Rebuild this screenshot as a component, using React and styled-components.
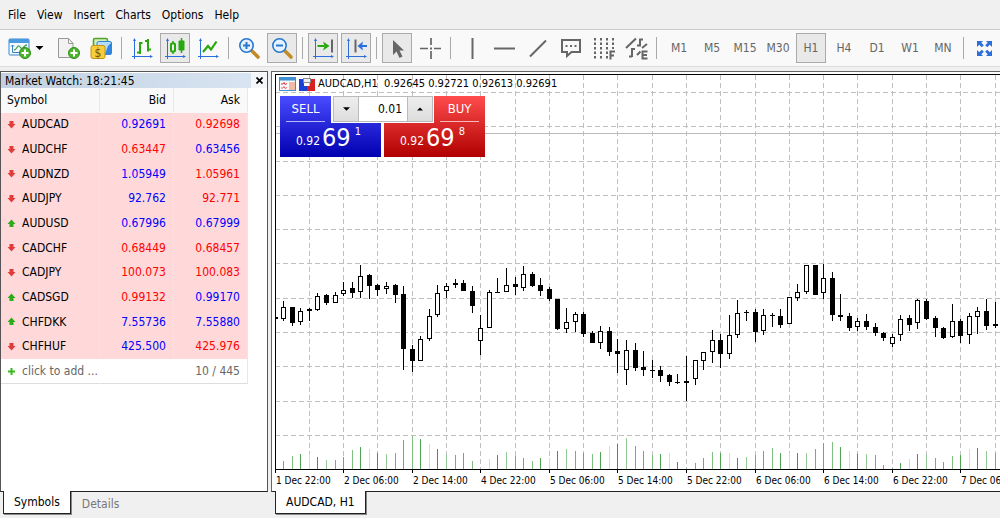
import React, { useState } from "react";
import styled, { createGlobalStyle, css } from "styled-components";

const GlobalStyle = createGlobalStyle`
  *, *::before, *::after { box-sizing: border-box; }
  body {
    margin: 0;
    background: #f0f0f0;
    color: #000;
    font: 12px/16px "DejaVu Sans Condensed", "Noto Sans", sans-serif;
  }
  button, input { font: inherit; color: inherit; }
  button { cursor: pointer; }
`;

const Page = styled.div`
  display: flex;
  flex-direction: column;
  min-height: 100vh;
  overflow: hidden;
`;

const MenuBar = styled.nav`
  display: flex;
  align-items: center;
  gap: 11px;
  height: 29px;
  padding: 0 8px;
`;

const MenuItem = styled.button`
  padding: 0;
  border: 0;
  background: none;
`;

const ToolBar = styled.div`
  display: flex;
  align-items: center;
  gap: 3px;
  height: 38px;
  padding-left: 4px;
  overflow: hidden;
  background: #f9f9f9;
  border-top: 1px solid #ccc;
  border-bottom: 1px solid #ddd;
`;

const ToolButton = styled.button`
  display: flex;
  flex: none;
  align-items: center;
  justify-content: ${(p) => (p.$wide ? "flex-start" : "center")};
  gap: 4px;
  width: ${(p) => (p.$wide ? 46 : 30)}px;
  height: 30px;
  padding: 0 0 0 ${(p) => (p.$wide ? 3 : 0)}px;
  color: #666;
  background: ${(p) => (p.$on ? "#e9e9e9" : "none")};
  border: 1px solid ${(p) => (p.$on ? "#aaa" : "transparent")};
  white-space: nowrap;
`;

const Periods = styled.div`
  display: flex;
  flex: none;
  gap: 3px;
  margin-left: 2px;
`;

const Separator = styled.span`
  flex: none;
  width: 1px;
  height: 22px;
  margin: 0 2px;
  background: #aaa;
`;

const Icon = styled.svg`
  display: block;
  flex: none;
`;

const Workspace = styled.main`
  display: flex;
  flex: 1;
  gap: 3px;
  padding-top: 4px;
`;

const Side = styled.section`
  display: flex;
  flex-direction: column;
  flex: none;
  width: 268px;
`;

const SideFrame = styled.div`
  flex: 1;
  padding-top: 1px;
  background: #fff;
  border: 1px solid #555;
  border-bottom-color: #222;
`;

const SideTitle = styled.header`
  display: flex;
  align-items: center;
  height: 15px;
  padding-left: 4px;
  background: linear-gradient(90deg, #c2d0e1, #d9e5f2);
`;

const TitleText = styled.h2`
  flex: 1;
  margin: 0;
  font-size: 12px;
  line-height: 14px;
  font-weight: 400;
`;

const CloseButton = styled.button`
  display: grid;
  place-items: center;
  align-self: stretch;
  width: 16px;
  padding: 0;
  border: 0;
  background: #f4f6f8;
`;

const Quotes = styled.table`
  width: 247px;
  height: 296px;
  border-collapse: separate;
  border-spacing: 0;
  table-layout: fixed;
`;

const Row = styled.tr`
  height: 24px;
`;

const Cell = styled.td`
  width: ${(p) => p.$w};
  padding: 0 7px 0 6px;
  text-align: ${(p) => (p.$num ? "right" : "left")};
  font-weight: 400;
  color: ${(p) => p.$color || "#000"};
  background: ${(p) => p.$bg || "#fff"};
  border-right: 1px solid ${(p) => (p.$open ? "transparent" : "#ece6e6")};
  border-bottom: 1px solid ${(p) => (p.$last ? "#ddd" : p.$bg || "#fff")};
`;

const SymbolName = styled.span`
  display: flex;
  align-items: center;
  gap: 6px;
  color: ${(p) => p.$color || "#000"};
`;

const AddButton = styled.button`
  padding: 0;
  border: 0;
  background: none;
  white-space: nowrap;
`;

const TabStrip = styled.div`
  display: flex;
  align-items: flex-start;
  flex: none;
  height: 26px;
  padding-left: ${(p) => p.$inset}px;
`;

const Tab = styled.button`
  height: ${(p) => (p.$on ? 23 : 24)}px;
  margin-top: ${(p) => (p.$on ? -1 : 0)}px;
  padding: 0 10px;
  border: ${(p) => (p.$on ? "1px solid #222" : "1px solid transparent")};
  border-top: 0;
  background: ${(p) => (p.$on ? "#fff" : "none")};
  color: ${(p) => (p.$on ? "#000" : "#777")};
  box-shadow: ${(p) => (p.$on ? "1px 1px 0 #888" : "none")};
`;

const ChartSide = styled.section`
  display: flex;
  flex-direction: column;
  flex: 1;
  min-width: 0;
`;

const ChartFrame = styled.div`
  flex: 1;
  padding: 2px 0 0 3px;
  background: #fff;
  border: 1px solid #666;
  border-right: 0;
  border-bottom-color: #222;
`;

const ChartArea = styled.div`
  position: relative;
  overflow: hidden;
  border-top: 1px solid #000;
`;

const ChartSvg = styled.svg`
  display: block;
  width: 100%;
  height: 398px;
`;

const ChartHeader = styled.div`
  position: absolute;
  top: 1px;
  left: 0;
  display: flex;
  align-items: center;
  gap: 3px;
  height: 16px;
  padding-left: 4px;
  font-size: 11px;
  white-space: pre;
`;

const TimeAxis = styled.ol`
  display: flex;
  width: max-content;
  height: 18px;
  margin: 0;
  padding: 0;
  list-style: none;
  font-size: 10px;
  line-height: 16px;
`;

const TimeMark = styled.li`
  width: ${(p) => p.$w}px;
  padding-left: 1px;
  white-space: nowrap;
`;

const TradePanel = styled.div`
  position: absolute;
  top: 21px;
  left: 5px;
  display: flex;
  gap: 3px;
  width: 205px;
  background: #fff;
`;

const sellShape = css`
  align-items: flex-start;
  background: linear-gradient(#4a4aff, #0000b0);
  clip-path: polygon(0 0, 51px 0, 51px 27px, 100% 27px, 100% 100%, 0 100%);
`;

const buyShape = css`
  align-items: flex-end;
  background: linear-gradient(#ff4d4d, #b00000);
  clip-path: polygon(50px 0, 100% 0, 100% 100%, 0 100%, 0 27px, 50px 27px);
`;

const TradeButton = styled.button`
  display: flex;
  flex-direction: column;
  flex: 1;
  height: 61px;
  padding: 0;
  border: 0;
  color: #fff;
  ${(p) => (p.$buy ? buyShape : sellShape)}
`;

const TradeSide = styled.span`
  width: 39px;
  height: 26px;
  margin: 0 6px;
  font-size: 13px;
  line-height: 26px;
  border-bottom: 1px solid #ffffffaa;
`;

const TradePrice = styled.span`
  display: flex;
  align-items: flex-start;
  align-self: stretch;
  padding-left: 16px;
  gap: 2px;
  line-height: 38px;
`;

const PriceBig = styled.span`
  font-size: 25px;
  line-height: 31px;
`;

const PriceSmall = styled.sup`
  margin-left: 2px;
  font-size: 11px;
  line-height: 20px;
  vertical-align: baseline;
`;

const Volume = styled.div`
  position: absolute;
  top: 0;
  left: 53px;
  display: flex;
  width: 100px;
  height: 26px;
  border: 1px solid #bbb;
  background: #fff;
`;

const StepButton = styled.button`
  display: grid;
  place-items: center;
  width: 25px;
  padding: 0;
  border: 0;
  background: linear-gradient(#eee, #ddd);
  border-left: ${(p) => (p.$up ? "1px solid #bbb" : "0")};
  border-right: ${(p) => (p.$up ? "0" : "1px solid #bbb")};
`;

const VolumeInput = styled.input`
  flex: 1;
  min-width: 0;
  padding: 0 5px;
  border: 0;
  background: none;
  text-align: right;
  outline: 0;
`;

/* ---------- icons ---------- */

const BLUE = "#2a6fdc";
const GREEN = "#27a80c";
const GRAY = "#666";

const PlusBadge = () => (
  <g>
    <circle cx="17" cy="16" r="5.500" fill="#4cb52c" stroke="#2f8f18" />
    <path d="M17 12.500v7M13.500 16h7" stroke="#fff" strokeWidth="2" />
  </g>
);

const Axes = () => (
  <g stroke={BLUE} fill={BLUE}>
    <path d="M3.500 4v15.500H19M1 19.500h2M3.500 19v3" fill="none" strokeWidth="1" />
    <path d="M3.500 1l1.500 3h-3zM22 19.500l-3-1.500v3z" stroke="none" />
  </g>
);

const icons = {
  newChart: (
    <>
      <rect x="1" y="2" width="20" height="16" rx="1" fill="#f4faff" stroke="#3b87cf" />
      <rect x="1" y="2" width="20" height="4" fill="#4b9ae0" />
      <path d="M4.500 8v7.500H15M3 9.500l1.500-1.500L6 9.500" fill="none" stroke="#3b7fc4" />
      <path d="M6 13c3 0 3-5 5-4s2 4 4 2 2-3 4-3" fill="none" stroke="#43a047" strokeWidth="1.300" />
      <PlusBadge />
    </>
  ),
  newFile: (
    <>
      <path d="M1.500 1.500h10l4.500 5v14H1.500z" fill="#f2f2f2" stroke="#999" />
      <path d="M11.500 1.500v5h4.500z" fill="#fff" stroke="#999" />
      <PlusBadge />
    </>
  ),
  money: (
    <>
      <rect x="3.500" y="1.500" width="14" height="12" rx="1.500" fill="#d5efb8" stroke="#4fa52e" strokeWidth="1.600" />
      <rect x="7" y="4.500" width="14.500" height="13" rx="1.500" fill="#b5dcfb" stroke="#3184d8" />
      <path d="M18 9l3-3v11h-6z" fill="#2f86e0" />
      <rect x="1" y="8.500" width="14" height="13" rx="2" fill="#f8cd3c" stroke="#c9920c" />
      <text x="8" y="19.500" textAnchor="middle" fontSize="12" fill="#7a4e00">$</text>
    </>
  ),
  bars: (
    <>
      <Axes />
      <path d="M9 5v12M6 15.500h3M9 6h2.500M17 2v12.500M14 4h3M17 12.500h3" stroke={GREEN} strokeWidth="2" />
    </>
  ),
  candles: (
    <>
      <Axes />
      <path d="M9 4v13M17.500 1v15" stroke={GREEN} strokeWidth="1.500" />
      <rect x="7" y="6.500" width="4" height="8" rx="1" fill="#eee" stroke={GREEN} strokeWidth="2" />
      <rect x="14.500" y="3.500" width="6" height="10" rx="1" fill={GREEN} />
    </>
  ),
  line: (
    <>
      <Axes />
      <path d="M6 15l5-6 3 3.500 5.500-8" fill="none" stroke={GREEN} strokeWidth="2.200" />
    </>
  ),
  zoomIn: (
    <>
      <path d="M13.500 13.500l6.500 6.500" stroke="#c28a25" strokeWidth="3.600" strokeLinecap="round" />
      <circle cx="8.500" cy="8.500" r="6.700" fill="#e6f3ff" stroke="#2878d0" strokeWidth="1.600" />
      <path d="M8.500 5v7M5 8.500h7" stroke="#2878d0" strokeWidth="2" />
    </>
  ),
  zoomOut: (
    <>
      <path d="M13.500 13.500l6.500 6.500" stroke="#c28a25" strokeWidth="3.600" strokeLinecap="round" />
      <circle cx="8.500" cy="8.500" r="6.700" fill="#e6f3ff" stroke="#2878d0" strokeWidth="1.600" />
      <path d="M5 8.500h7" stroke="#2878d0" strokeWidth="2" />
    </>
  ),
  scroll: (
    <>
      <Axes />
      <path d="M5.500 9h7" stroke={GREEN} strokeWidth="2" />
      <path d="M11 4.500L17.500 9 11 13.500l1.500-4.500z" fill={GREEN} />
      <path d="M20 2.500v13" stroke={GRAY} strokeWidth="2" />
    </>
  ),
  shift: (
    <>
      <Axes />
      <path d="M10.500 2.500v13" stroke={GRAY} strokeWidth="2" />
      <path d="M16 9h6" stroke={BLUE} strokeWidth="2" />
      <path d="M18 4.500L12.500 9l5.500 4.500-1-4.500z" fill={BLUE} />
    </>
  ),
  cursor: <path d="M7 3v15l3.500-3.500 3 6.500 3-1.500-3-6H18z" fill={GRAY} />,
  cross: (
    <>
      <path d="M12 1v7M12 14v8M1 11.500h8M15 11.500h7" stroke={GRAY} strokeWidth="1.700" />
      <rect x="11" y="10.500" width="2" height="2" fill={GRAY} />
    </>
  ),
  vline: <path d="M12.500 1v21" stroke={GRAY} strokeWidth="2" />,
  hline: <path d="M1 11.500h21" stroke={GRAY} strokeWidth="2" />,
  trend: <path d="M4 19.500L20 3.500" stroke={GRAY} strokeWidth="2" />,
  note: (
    <>
      <path d="M3 3h18v12h-8.500l-4.500 4v-4H3z" fill="none" stroke={GRAY} strokeWidth="2" />
      <path d="M6.500 9h2M11 9h2M15.500 9h2" stroke={GRAY} strokeWidth="2" />
    </>
  ),
  fibo: (
    <>
      <path d="M3 1v21M9 1v21M15 1v21" stroke={GRAY} strokeWidth="2" strokeDasharray="2.500 2" />
      <path d="M21 1v11" stroke={GRAY} strokeWidth="2" strokeDasharray="2.500 2" />
      <path d="M18.500 22.500v-9M17.500 14.500h5.500M18 18.500h4" stroke={GRAY} strokeWidth="2" fill="none" />
    </>
  ),
  objects: (
    <>
      <path d="M1 11L11 1.500M12 18l3.500-3.500M17 11l5-4" stroke={GRAY} strokeWidth="2" />
      <path d="M15 1.500v8M15 2.500h3M12 8.500h3M7 11v9M7 12h3M4 19.500h3" stroke={GRAY} strokeWidth="2" />
      <path d="M22.500 14.500h-5v7h5M17.500 18h4.500" fill="none" stroke={GRAY} strokeWidth="2" />
    </>
  ),
  expand: (
    <g fill={BLUE}>
      <path d="M4 4h6L8.300 5.700l2.500 2.500-2 2-2.600-2.500L4 10z" />
      <path d="M18 4h-6l1.700 1.700-2.500 2.500 2 2 2.600-2.500L18 10z" transform="translate(1 0)" />
      <path d="M4 18h6l-1.700-1.700 2.500-2.500-2-2-2.600 2.500L4 12z" transform="translate(0 1)" />
      <path d="M18 18h-6l1.700-1.700-2.500-2.500 2-2 2.600 2.500L18 12z" transform="translate(1 1)" />
    </g>
  ),
};

const Glyph = ({ name }) => (
  <Icon width="23" height="23" viewBox="0 0 23 23" aria-hidden="true">{icons[name]}</Icon>
);

const Caret = ({ up, size = 8 }) => (
  <Icon width={size} height="4" viewBox="0 0 8 4" aria-hidden="true">
    <path d={up ? "M0 4h8L4 0z" : "M0 0h8L4 4z"} />
  </Icon>
);

const Direction = ({ up }) => (
  <Icon width="9" height="9" viewBox="0 0 9 9" aria-hidden="true">
    <path
      d={up ? "M4.500 0.500L8.500 5H6.500v3h-4V5h-2z" : "M4.500 8.500L8.500 4H6.500V1h-4v3h-2z"}
      fill={up ? "#2faa1a" : "#e03c3c"}
    />
  </Icon>
);

/* ---------- data ---------- */

const menus = ["File", "View", "Insert", "Charts", "Options", "Help"];

const toolGroups = [
  [["bars", "Bar chart"], ["candles", "Candlesticks"], ["line", "Line chart"]],
  [["zoomIn", "Zoom in"], ["zoomOut", "Zoom out"]],
  [["scroll", "Auto scroll"], ["shift", "Chart shift"]],
  [["cursor", "Cursor"], ["cross", "Crosshair"]],
  [["vline", "Vertical line"], ["hline", "Horizontal line"], ["trend", "Trend line"], ["note", "Text"], ["fibo", "Fibonacci"], ["objects", "Objects"]],
];
const pressed = ["candles", "zoomOut", "scroll", "shift", "cursor"];

const periods = ["M1", "M5", "M15", "M30", "H1", "H4", "D1", "W1", "MN"];

const UP = "#00f";
const DOWN = "#f00";
const quotes = [
  ["AUDCAD", "0.92691", "0.92698", false, UP, DOWN],
  ["AUDCHF", "0.63447", "0.63456", false, DOWN, UP],
  ["AUDNZD", "1.05949", "1.05961", false, UP, DOWN],
  ["AUDJPY", "92.762", "92.771", false, UP, DOWN],
  ["AUDUSD", "0.67996", "0.67999", true, UP, UP],
  ["CADCHF", "0.68449", "0.68457", false, DOWN, DOWN],
  ["CADJPY", "100.073", "100.083", false, DOWN, DOWN],
  ["CADSGD", "0.99132", "0.99170", true, DOWN, UP],
  ["CHFDKK", "7.55736", "7.55880", true, UP, UP],
  ["CHFHUF", "425.500", "425.976", false, UP, DOWN],
];

/* high, body top, body bottom, low, hollow; in thirds of a pixel below BASE */
const bars = [
  [200, 200, 208, 208, 0], [154, 171, 208, 213, 1], [170, 171, 218, 228, 0], [174, 184, 217, 224, 1],
  [173, 178, 182, 213, 0], [129, 139, 179, 184, 1], [132, 135, 159, 165, 0], [126, 136, 160, 160, 1],
  [96, 121, 133, 137, 1], [96, 115, 128, 144, 0], [44, 79, 127, 143, 1], [73, 76, 108, 147, 0],
  [103, 105, 119, 138, 0], [96, 108, 118, 131, 1], [102, 105, 134, 159, 0], [109, 132, 298, 360, 0],
  [286, 298, 333, 366, 0], [258, 267, 332, 333, 1], [177, 197, 266, 272, 1], [106, 130, 194, 201, 1],
  [99, 108, 124, 143, 1], [87, 100, 104, 115, 0], [90, 99, 122, 122, 0], [108, 122, 167, 189, 0],
  [196, 235, 272, 314, 1], [120, 126, 233, 233, 1], [84, 126, 129, 130, 0], [54, 106, 125, 125, 1],
  [80, 102, 111, 135, 0], [48, 73, 115, 122, 1], [67, 73, 108, 111, 0], [84, 105, 122, 138, 0],
  [110, 118, 147, 153, 0], [147, 148, 237, 241, 0], [174, 216, 236, 250, 1], [186, 193, 215, 247, 1],
  [186, 193, 252, 260, 0], [244, 250, 279, 279, 0], [228, 244, 278, 298, 1], [231, 244, 305, 318, 0],
  [267, 303, 311, 370, 0], [270, 300, 359, 405, 1], [280, 299, 353, 362, 0], [303, 351, 360, 378, 0],
  [331, 359, 363, 383, 0], [347, 360, 378, 395, 0], [372, 376, 395, 407, 0], [373, 395, 399, 402, 0],
  [318, 393, 399, 453, 0], [331, 331, 388, 404, 1], [306, 307, 332, 360, 1], [240, 270, 307, 338, 1],
  [253, 270, 311, 354, 0], [195, 255, 311, 327, 1], [150, 189, 256, 263, 1], [180, 185, 189, 212, 0],
  [177, 186, 247, 276, 0], [177, 196, 242, 254, 1], [189, 195, 199, 231, 0], [177, 198, 224, 234, 0],
  [142, 142, 223, 223, 1], [102, 126, 143, 152, 1], [45, 45, 127, 131, 1], [44, 45, 134, 134, 0],
  [41, 85, 128, 147, 1], [67, 84, 195, 212, 0], [132, 196, 202, 212, 0], [189, 199, 234, 243, 0],
  [204, 214, 230, 243, 1], [192, 213, 231, 240, 0], [219, 231, 248, 257, 0], [245, 248, 263, 272, 0],
  [251, 262, 281, 291, 1], [195, 206, 256, 272, 1], [195, 205, 224, 243, 0], [147, 151, 220, 236, 1],
  [147, 154, 208, 209, 0], [199, 205, 234, 260, 0], [231, 234, 263, 266, 0], [163, 213, 260, 263, 1],
  [208, 212, 257, 279, 0], [189, 199, 256, 282, 1], [171, 184, 200, 253, 1], [147, 183, 227, 240, 0],
  [156, 223, 228, 235, 0],
];

const volumes = [
  0, 27, 42, 48, 47, 38, 30, 30, 39, 60, 69, 62, 51, 48, 50, 90, 102, 93, 77, 63, 46, 46, 52, 27, 4,
  32, 45, 54, 43, 36, 28, 35, 36, 56, 63, 56, 50, 48, 53, 72, 77, 97, 73, 56, 46, 48, 51, 24, 5, 21,
  35, 54, 51, 51, 36, 39, 45, 57, 66, 52, 52, 52, 52, 63, 82, 84, 69, 56, 48, 48, 45, 15, 7, 21, 32,
  48, 45, 35, 24, 42, 45, 63, 66, 57, 50,
];
const volumeShades = ["#6db56f", "#66b068", "#7fbf80", "#4fa351", "#c9e5c9", "#3f9a42", "#93c994"];

const times = [
  "1 Dec 22:00", "2 Dec 06:00", "2 Dec 14:00", "4 Dec 22:00", "5 Dec 06:00", "5 Dec 14:00",
  "5 Dec 22:00", "6 Dec 06:00", "6 Dec 14:00", "6 Dec 22:00", "7 Dec 06:00",
];

const STEP = 60 / 7;
const BASE = 175;
const AXIS = 395;
const barX = (i) => Math.floor(i * STEP);

function Candle({ i, bar: [high, top, bottom, low, hollow] }) {
  const x = barX(i);
  const y = (v) => Math.round(BASE + v / 3);
  const bodyHeight = Math.max(1, y(bottom) - y(top));
  return (
    <g>
      <rect x={x} y={y(high)} width="1" height={Math.max(1, y(low) - y(high))} />
      {hollow ? (
        <rect x={x - 1.5} y={y(top) + 0.5} width="4" height={Math.max(1, bodyHeight - 1)} fill="#fff" stroke="#000" />
      ) : (
        <rect x={x - 2} y={y(top)} width="5" height={bodyHeight} />
      )}
    </g>
  );
}

function PriceChart() {
  const columns = Array.from({ length: 80 }, (_, i) => barX(4 * (i + 1)) + 0.5);
  const rows = Array.from({ length: 11 }, (_, i) => Math.round(17 + i * 4 * STEP) + 0.5);
  return (
    <ChartSvg role="img" aria-label="AUDCAD hourly candlestick chart">
      <g stroke="#c0c0c0" strokeDasharray="5 3">
        {columns.map((x) => <line key={x} x1={x} x2={x} y1="0" y2={AXIS} />)}
        {rows.map((y) => <line key={y} x1="0" x2="100%" y1={y} y2={y} />)}
      </g>
      <line x1="0" x2="100%" y1="58.5" y2="58.5" stroke="#bbb" />
      {volumes.map((v, i) => (
        <rect key={i} x={barX(i)} y={Math.round(AXIS - v / 3)} width="1" height={Math.round(v / 3)} fill={volumeShades[i % 7]} />
      ))}
      {bars.map((bar, i) => <Candle key={i} i={i} bar={bar} />)}
      <path d="M0.5 0V399" stroke="#000" />
      <line x1="0" x2="100%" y1={AXIS - 0.5} y2={AXIS - 0.5} stroke="#000" />
      {times.map((t, i) => <rect key={t} x={barX(8 * i)} y={AXIS} width="1" height="4" />)}
    </ChartSvg>
  );
}

const BookIcon = () => (
  <Icon width="17" height="14" viewBox="0 0 17 14" aria-hidden="true">
    <rect x="0.500" y="0.500" width="16" height="13" fill="#f4f8fc" stroke="#3f8fd2" />
    <path d="M0 0h17v3.500H0z" fill="#3f8fd2" />
    <path d="M10 5h6v8h-6z" fill="#f3b9a4" />
    <path d="M2 7h2l1-1.500 1 2 2-1" fill="none" stroke="#e33" />
    <path d="M2 11h2l1-1.500 1 2 2-1" fill="none" stroke="#e66" />
  </Icon>
);

const TradeIcon = () => (
  <Icon width="16" height="13" viewBox="0 0 16 13" aria-hidden="true">
    <path d="M0 1h5v7h3v5H0z" fill="#1c3fd8" />
    <path d="M11 1h5v12H8V8h3z" fill="#d82020" />
    <rect x="4.500" y="0.500" width="7" height="4" fill="#eee" stroke="#888" />
  </Icon>
);

function OneClickTrading() {
  const [volume, setVolume] = useState("0.01");
  const change = (d) => setVolume(Math.max(0.01, Number(volume) + d).toFixed(2));
  return (
    <TradePanel>
      <TradeButton>
        <TradeSide>SELL</TradeSide>
        <TradePrice>0.92<PriceBig>69</PriceBig><PriceSmall>1</PriceSmall></TradePrice>
      </TradeButton>
      <TradeButton $buy>
        <TradeSide>BUY</TradeSide>
        <TradePrice>0.92<PriceBig>69</PriceBig><PriceSmall>8</PriceSmall></TradePrice>
      </TradeButton>
      <Volume>
        <StepButton aria-label="Decrease volume" onClick={() => change(-0.01)}><Caret size={7} /></StepButton>
        <VolumeInput aria-label="Volume" value={volume} onChange={(e) => setVolume(e.target.value)} />
        <StepButton $up aria-label="Increase volume" onClick={() => change(0.01)}><Caret up size={6} /></StepButton>
      </Volume>
    </TradePanel>
  );
}

function MarketWatch() {
  return (
    <Side>
      <SideFrame>
        <SideTitle>
          <TitleText>Market Watch: 18:21:45</TitleText>
          <CloseButton aria-label="Close">
            <Icon width="7" height="7" viewBox="0 0 7 7" aria-hidden="true">
              <path d="M0.500 0.500l6 6M6.500 0.500l-6 6" stroke="#000" strokeWidth="1.700" />
            </Icon>
          </CloseButton>
        </SideTitle>
        <Quotes>
          <tbody>
            <Row>
              <Cell as="th" scope="col" $w="40%" $bg="#f9f9f9">Symbol</Cell>
              <Cell as="th" scope="col" $w="30%" $num $bg="#f9f9f9">Bid</Cell>
              <Cell as="th" scope="col" $w="30%" $num $bg="#f9f9f9">Ask</Cell>
            </Row>
            {quotes.map(([symbol, bid, ask, up, bidColor, askColor]) => (
              <Row key={symbol}>
                <Cell $bg="#ffd9d9"><SymbolName><Direction up={up} />{symbol}</SymbolName></Cell>
                <Cell $num $bg="#ffd9d9" $color={bidColor}>{bid}</Cell>
                <Cell $num $bg="#ffd9d9" $color={askColor}>{ask}</Cell>
              </Row>
            ))}
            <Row>
              <Cell $last $open>
                <SymbolName $color="#666">
                  <Icon width="9" height="9" viewBox="0 0 9 9" aria-hidden="true">
                    <path d="M4.500 1v7M1 4.500h7" stroke="#3cb81e" strokeWidth="2" />
                  </Icon>
                  <AddButton>click to add ...</AddButton>
                </SymbolName>
              </Cell>
              <Cell $last $num colSpan={2} $color="#666">10 / 445</Cell>
            </Row>
          </tbody>
        </Quotes>
      </SideFrame>
      <TabStrip $inset={3}>
        <Tab $on>Symbols</Tab>
        <Tab>Details</Tab>
      </TabStrip>
    </Side>
  );
}

export default function App() {
  const [period, setPeriod] = useState("H1");
  return (
    <Page>
      <GlobalStyle />
      <MenuBar>{menus.map((m) => <MenuItem key={m}>{m}</MenuItem>)}</MenuBar>
      <ToolBar>
        <ToolButton $wide aria-label="New chart"><Glyph name="newChart" /><Caret size={9} /></ToolButton>
        <ToolButton aria-label="New order"><Glyph name="newFile" /></ToolButton>
        <ToolButton aria-label="Trade"><Glyph name="money" /></ToolButton>
        {toolGroups.map((group) => (
          <React.Fragment key={group[0][0]}>
            <Separator />
            {group.map(([name, label]) => (
              <ToolButton key={name} aria-label={label} $on={pressed.includes(name)}><Glyph name={name} /></ToolButton>
            ))}
          </React.Fragment>
        ))}
        <Separator />
        <Periods>
          {periods.map((p) => (
            <ToolButton key={p} $on={p === period} onClick={() => setPeriod(p)}>{p}</ToolButton>
          ))}
        </Periods>
        <Separator />
        <ToolButton aria-label="Full screen"><Glyph name="expand" /></ToolButton>
      </ToolBar>
      <Workspace>
        <MarketWatch />
        <ChartSide>
          <ChartFrame>
            <ChartArea>
              <PriceChart />
              <ChartHeader>
                <BookIcon />
                <TradeIcon />
                <span>{"AUDCAD,H1  0.92645 0.92721 0.92613 0.92691"}</span>
              </ChartHeader>
              <OneClickTrading />
              <TimeAxis>
                {times.map((t, i) => <TimeMark key={t} $w={barX(8 * (i + 1)) - barX(8 * i)}>{t}</TimeMark>)}
              </TimeAxis>
            </ChartArea>
          </ChartFrame>
          <TabStrip $inset={4}><Tab $on>AUDCAD, H1</Tab></TabStrip>
        </ChartSide>
      </Workspace>
    </Page>
  );
}
